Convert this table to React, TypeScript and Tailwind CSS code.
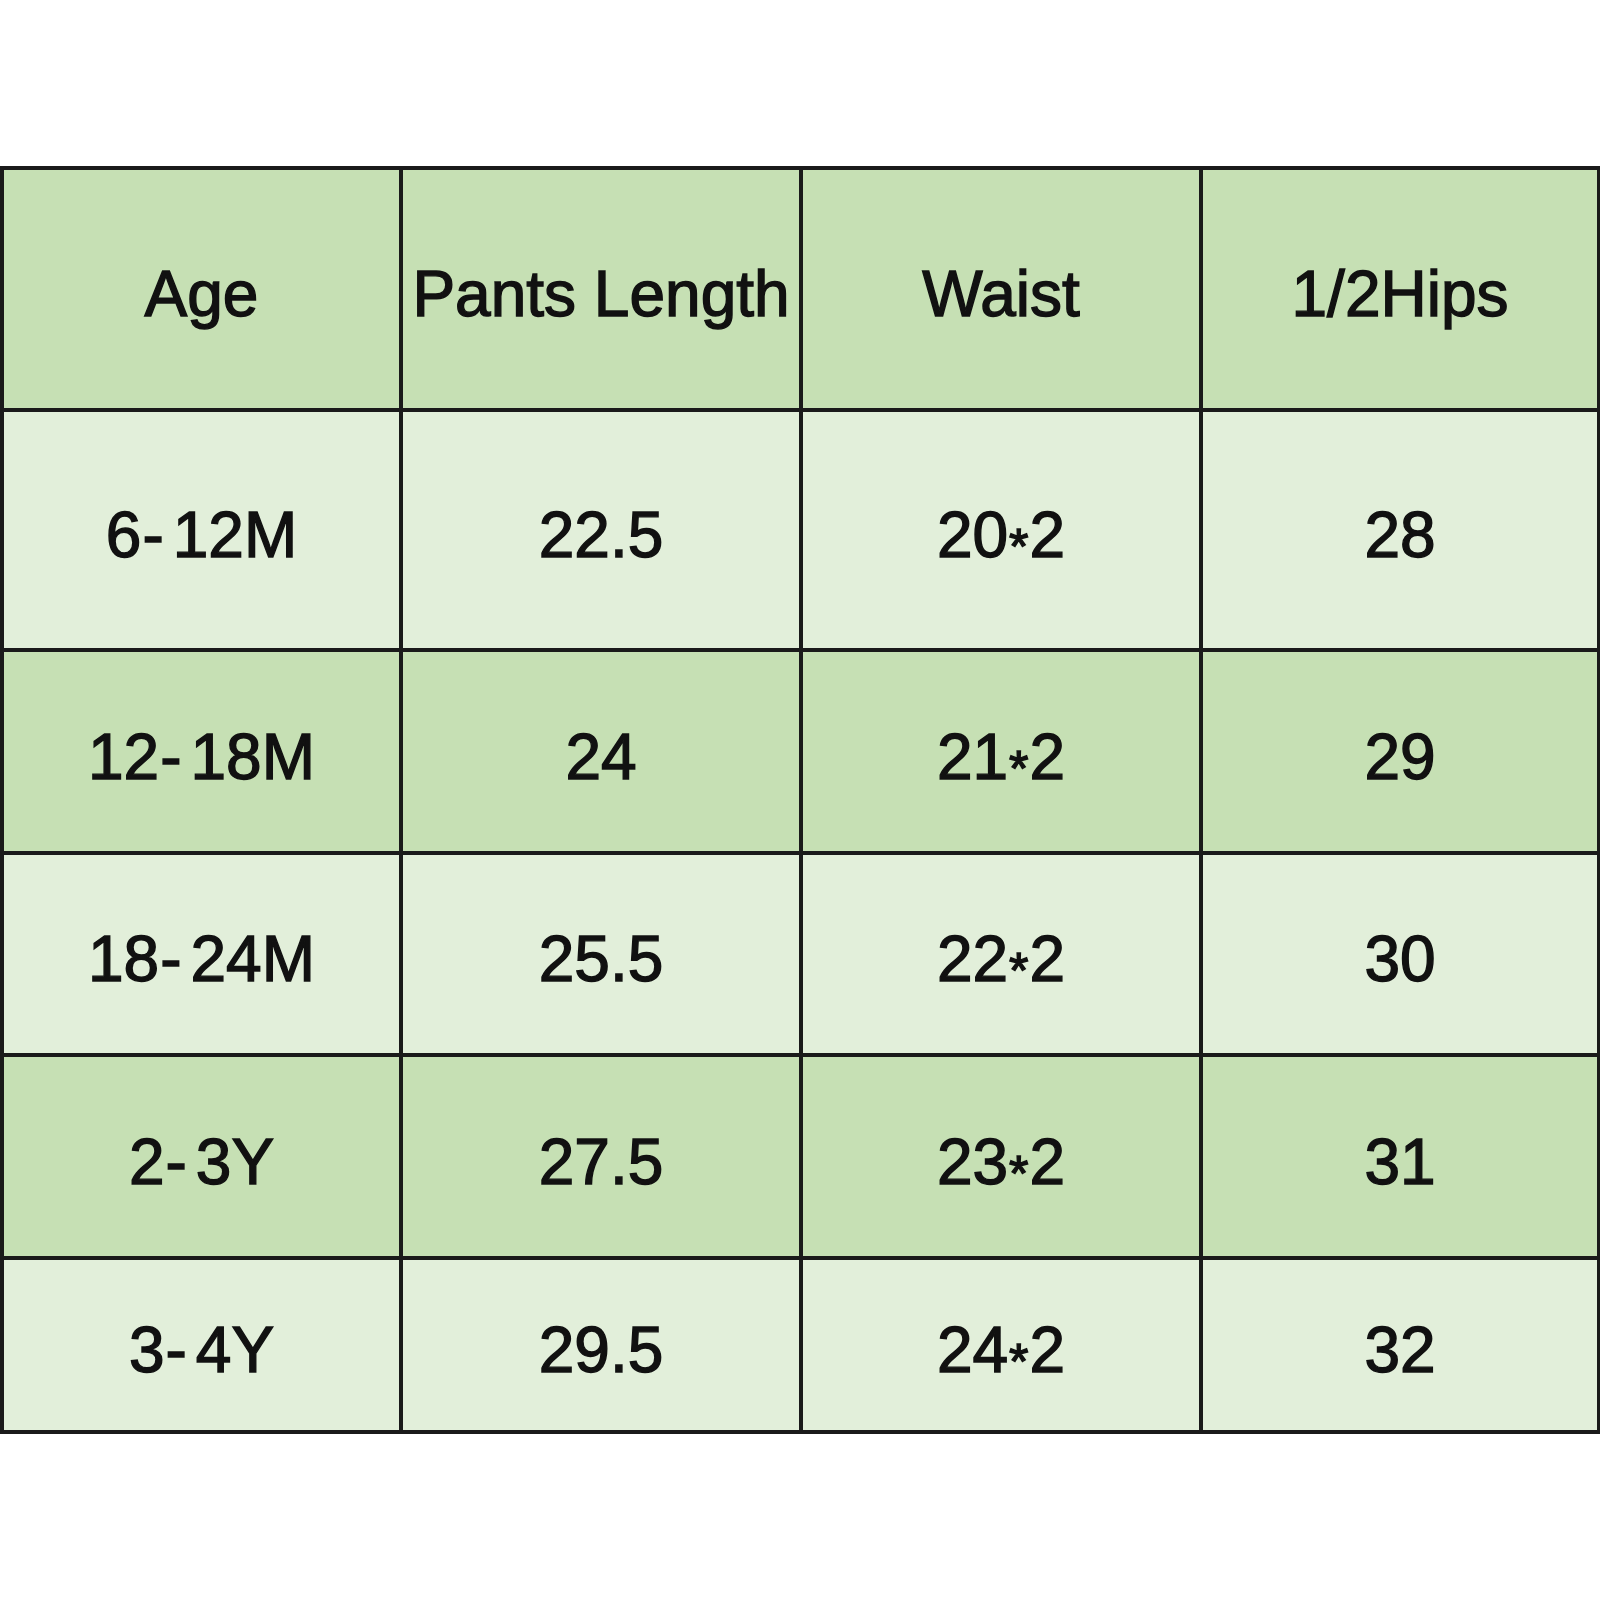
import React from "react";

const rows = [
  { h: "h-[240px]", bg: "bg-[#e2efda]", c: ["6-12M", "22.5", "20*2", "28"] },
  { h: "h-[203px]", bg: "bg-[#c6e0b4]", c: ["12-18M", "24", "21*2", "29"] },
  { h: "h-[202px]", bg: "bg-[#e2efda]", c: ["18-24M", "25.5", "22*2", "30"] },
  { h: "h-[203px]", bg: "bg-[#c6e0b4]", c: ["2-3Y", "27.5", "23*2", "31"] },
  { h: "h-[174px]", bg: "bg-[#e2efda]", c: ["3-4Y", "29.5", "24*2", "32"] },
];

function Cell({ t }: { t: string }) {
  if (t.includes("-")) {
    const [a, b] = t.split("-");
    return (
      <>
        {a}
        <span className="ml-[1px] mr-[9px]">-</span>
        {b}
      </>
    );
  }
  if (t.includes("*")) {
    const [a, b] = t.split("*");
    return (
      <>
        {a}
        <span className="inline-block text-[50px] translate-y-[7px] mx-[1px]">*</span>
        {b}
      </>
    );
  }
  return <>{t}</>;
}

export default function App() {
  return (
    <div className="w-[1600px] h-[1600px] bg-white pt-[166px]">
      <table
        className="w-[1597px] border-collapse table-fixed text-[#111] text-[64px] leading-none"
        style={{ fontFamily: '"Liberation Sans", Arial, sans-serif' }}
      >
        <colgroup>
          <col className="w-[399px]" />
          <col className="w-[400px]" />
          <col className="w-[400px]" />
          <col className="w-[398px]" />
        </colgroup>
        <thead>
          <tr className="h-[242px] bg-[#c6e0b4]">
            {["Age", "Pants Length", "Waist", "1/2Hips"].map((t) => (
              <th
                key={t}
                className="border-[4px] border-[#1a1a1a] font-normal text-center align-middle p-0 pt-[10px] whitespace-nowrap [-webkit-text-stroke:1.4px_#111]"
              >
                {t}
              </th>
            ))}
          </tr>
        </thead>
        <tbody>
          {rows.map((r, i) => (
            <tr key={i} className={`${r.h} ${r.bg}`}>
              {r.c.map((t, j) => (
                <td
                  key={j}
                  className="border-[4px] border-[#1a1a1a] text-center align-middle p-0 pt-[10px] whitespace-nowrap [-webkit-text-stroke:1.4px_#111]"
                >
                  <Cell t={t} />
                </td>
              ))}
            </tr>
          ))}
        </tbody>
      </table>
    </div>
  );
}
